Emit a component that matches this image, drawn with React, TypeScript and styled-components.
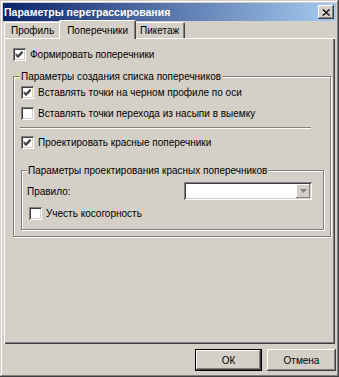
import React from "react";
import styled, { createGlobalStyle } from "styled-components";

const GlobalStyle = createGlobalStyle`
  html, body {
    margin: 0;
    padding: 0;
    background: #d4d0c8;
  }
  body {
    font-family: "Liberation Sans", Arial, sans-serif;
    font-size: 10px;
    color: #000;
  }
`;

const Window = styled.div`
  width: 339px;
  height: 377px;
  box-sizing: border-box;
  padding: 3px;
  display: flex;
  flex-direction: column;
  background: #d4d0c8;
  box-shadow: inset -1px -1px #404040, inset 1px 1px #d4d0c8,
    inset -2px -2px #808080, inset 2px 2px #ffffff;
`;

const TitleBar = styled.div`
  height: 18px;
  flex: none;
  display: flex;
  align-items: center;
  justify-content: space-between;
  padding: 0 2px 0 1px;
  background: linear-gradient(to right, #0a246a, #a6caf0);
  color: #fff;
  font-weight: bold;
  font-size: 10.5px;
`;

const CloseButton = styled.div`
  width: 16px;
  height: 14px;
  box-sizing: border-box;
  display: flex;
  align-items: center;
  justify-content: center;
  background: #d4d0c8;
  box-shadow: inset -1px -1px #404040, inset 1px 1px #ffffff,
    inset -2px -2px #808080;
`;

const TabStrip = styled.div`
  height: 17px;
  flex: none;
  display: flex;
  align-items: flex-end;
  padding-left: 1px;
  position: relative;
  z-index: 1;
`;

const Tab = styled.div<{ active?: boolean; pad: number }>`
  box-sizing: border-box;
  height: ${(p) => (p.active ? "19px" : "16px")};
  margin: ${(p) => (p.active ? "0 -2px -1px -2px" : "0")};
  padding: ${(p) => (p.active ? "2px" : "1px")} ${(p) => p.pad}px 0;
  display: flex;
  align-items: center;
  background: #d4d0c8;
  border-top-left-radius: 2px;
  border-top-right-radius: 2px;
  box-shadow: inset 1px 1px #ffffff, inset -1px 0 #404040, inset -2px 0 #808080;
  position: relative;
  z-index: ${(p) => (p.active ? 1 : 0)};
`;

const Panel = styled.div`
  flex: 1;
  margin: 0 1px;
  box-sizing: border-box;
  padding: 10px 4px 0 9px;
  display: flex;
  flex-direction: column;
  box-shadow: inset 1px 1px #ffffff, inset -1px -1px #404040,
    inset -2px -2px #808080;
`;

const Footer = styled.div`
  flex: none;
  display: flex;
  justify-content: flex-end;
  gap: 5px;
  padding: 5px 0 3px;
`;

const Button = styled.div<{ primary?: boolean }>`
  width: ${(p) => (p.primary ? "67px" : "69px")};
  height: 22px;
  box-sizing: border-box;
  display: flex;
  align-items: center;
  justify-content: center;
  background: #d4d0c8;
  box-shadow: ${(p) =>
    p.primary
      ? "inset 0 0 0 1px #000, inset -2px -2px #404040, inset 2px 2px #ffffff, inset -3px -3px #808080"
      : "inset -1px -1px #404040, inset 1px 1px #ffffff, inset -2px -2px #808080"};
`;

const CheckRow = styled.label<{ indent?: number }>`
  display: flex;
  align-items: center;
  gap: 4px;
  height: 13px;
  line-height: 13px;
  margin-left: ${(p) => p.indent ?? 0}px;
  white-space: nowrap;
`;

const Box = styled.span`
  width: 13px;
  height: 13px;
  flex: none;
  box-sizing: border-box;
  display: flex;
  align-items: center;
  justify-content: center;
  background: #fff;
  box-shadow: inset 1px 1px #808080, inset -1px -1px #ffffff,
    inset 2px 2px #404040, inset -2px -2px #d4d0c8;
`;

const Group = styled.div<{ mt: number; pad: string }>`
  position: relative;
  margin-top: ${(p) => p.mt}px;
  padding: ${(p) => p.pad};
  border: 1px solid #808080;
  box-shadow: inset 1px 1px #ffffff, 1px 1px #ffffff;
  display: flex;
  flex-direction: column;
`;

const Caption = styled.span<{ left: number }>`
  position: absolute;
  top: -7px;
  left: ${(p) => p.left}px;
  padding: 0 1px;
  height: 13px;
  line-height: 13px;
  background: #d4d0c8;
  white-space: nowrap;
`;

const RowStack = styled.div`
  display: flex;
  flex-direction: column;
  gap: 8px;
`;

const Separator = styled.div`
  height: 0;
  margin: 7px 13px 7px -1px;
  border-top: 1px solid #808080;
  border-bottom: 1px solid #ffffff;
`;

const FieldRow = styled.div`
  display: flex;
  align-items: center;
  justify-content: space-between;
  height: 18px;
  margin-bottom: 7px;
`;

const Combo = styled.div`
  width: 128px;
  height: 18px;
  box-sizing: border-box;
  padding: 2px;
  display: flex;
  justify-content: flex-end;
  background: #fff;
  box-shadow: inset 1px 1px #808080, inset -1px -1px #ffffff,
    inset 2px 2px #404040, inset -2px -2px #d4d0c8;
`;

const ComboArrow = styled.div`
  width: 14px;
  height: 14px;
  box-sizing: border-box;
  display: flex;
  align-items: center;
  justify-content: center;
  background: #d4d0c8;
  box-shadow: inset -1px -1px #808080, inset 1px 1px #ffffff;
`;

const Check = ({ checked }: { checked?: boolean }) => (
  <Box>
    {checked && (
      <svg width="9" height="9" viewBox="0 0 9 9">
        <path
          d="M1 3.5 L3 5.5 L7.5 1 M1 4.5 L3 6.5 L7.5 2 M1 5.5 L3 7.5 L7.5 3"
          stroke="#000"
          strokeWidth="1"
          fill="none"
        />
      </svg>
    )}
  </Box>
);

const CheckItem = ({
  label,
  checked,
  indent,
}: {
  label: string;
  checked?: boolean;
  indent?: number;
}) => (
  <CheckRow indent={indent}>
    <Check checked={checked} />
    <span>{label}</span>
  </CheckRow>
);

const App = () => {
  return (
    <>
      <GlobalStyle />
      <Window>
        <TitleBar>
          <span>Параметры перетрассирования</span>
          <CloseButton>
            <svg width="8" height="7" viewBox="0 0 8 7">
              <path
                d="M0.5 0.5 L7 6.5 M1.5 0.5 L8 6.5 M7 0.5 L0.5 6.5 M8 0.5 L1.5 6.5"
                stroke="#000"
                strokeWidth="1"
              />
            </svg>
          </CloseButton>
        </TitleBar>
        <TabStrip>
          <Tab pad={7}>Профиль</Tab>
          <Tab active pad={8}>Поперечники</Tab>
          <Tab pad={6}>Пикетаж</Tab>
        </TabStrip>
        <Panel>
          <CheckItem label="Формировать поперечники" checked />
          <Group mt={15} pad="9px 6px 6px 7px">
            <Caption left={6}>Параметры создания списка поперечников</Caption>
            <RowStack>
              <CheckItem label="Вставлять точки на черном профиле по оси" checked />
              <CheckItem label="Вставлять точки перехода из насыпи в выемку" />
            </RowStack>
            <Separator />
            <CheckItem label="Проектировать красные поперечники" checked />
            <Group mt={21} pad="11px 11px 9px 5px">
              <Caption left={5}>Параметры проектирования красных поперечников</Caption>
              <FieldRow>
                <span>Правило:</span>
                <Combo>
                  <ComboArrow>
                    <svg width="7" height="4" viewBox="0 0 7 4">
                      <path d="M0 0 H7 L3.5 4 Z" fill="#808080" />
                    </svg>
                  </ComboArrow>
                </Combo>
              </FieldRow>
              <CheckItem label="Учесть косогорность" indent={2} />
            </Group>
          </Group>
        </Panel>
        <Footer>
          <Button primary>ОК</Button>
          <Button>Отмена</Button>
        </Footer>
      </Window>
    </>
  );
};

export default App;
